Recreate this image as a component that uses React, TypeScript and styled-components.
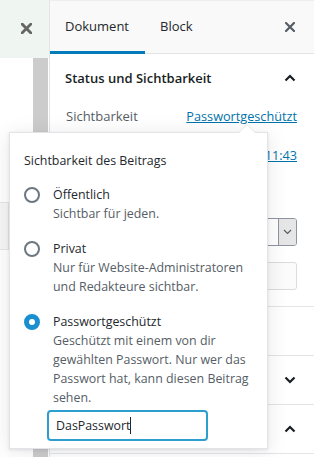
import React from "react";
import styled, { createGlobalStyle } from "styled-components";

const Global = createGlobalStyle`
  html, body { margin: 0; padding: 0; background: #fff; }
  body { font-family: "Open Sans", "Noto Sans", sans-serif; color: #23282d; }
  * { box-sizing: border-box; }
`;

const Page = styled.div`
  position: relative;
  width: 314px;
  height: 457px;
  overflow: hidden;
  display: flex;
  background: #fff;
`;

const LeftCol = styled.div`
  width: 49px;
  display: flex;
  flex-direction: column;
  background: #fff;
`;

const LeftHeader = styled.div`
  height: 58px;
  background: #eff5f1;
  display: flex;
  align-items: center;
  justify-content: flex-end;
  padding-right: 17px;
  padding-bottom: 1px;
`;

const LeftBody = styled.div`
  flex: 1;
  display: flex;
  justify-content: flex-end;
  position: relative;
`;

const ScrollBar = styled.div`
  width: 15px;
  margin-right: 1px;
  background: #cccccc;
`;

const GhostBox = styled.div`
  position: absolute;
  left: -2px;
  top: 144px;
  width: 11px;
  height: 48px;
  background: #f6f6f6;
  border: 1px solid #e6e6e6;
`;

const Sidebar = styled.div`
  flex: 1;
  border-left: 1px solid #e2e4e7;
  display: flex;
  flex-direction: column;
`;

const Tabs = styled.div`
  height: 54px;
  display: flex;
  align-items: stretch;
  background: #f9f9f9;
  border-bottom: 1px solid #e2e4e7;
  border-top: 1px solid #eeeeee;
`;

const Tab = styled.div<{ $active?: boolean }>`
  padding: 0 15px;
  width: ${(p) => (p.$active ? "95px" : "auto")};
  display: flex;
  align-items: center;
  font-size: 13px;
  color: #23282d;
  border-bottom: 3px solid ${(p) => (p.$active ? "#007cba" : "transparent")};
  margin-bottom: -1px;
`;

const TabSpacer = styled.div`
  flex: 1;
`;

const CloseBtn = styled.div`
  width: 48px;
  display: flex;
  align-items: center;
  justify-content: center;
`;

const Panel = styled.div`
  border-bottom: 1px solid #e2e4e7;
`;

const PanelHeader = styled.div`
  height: 48px;
  display: flex;
  align-items: center;
  justify-content: space-between;
  padding: 0 18px 0 15px;
  font-size: 13px;
  font-weight: 600;
  color: #191e23;
`;

const Row = styled.div<{ $h: number }>`
  height: ${(p) => p.$h}px;
  display: flex;
  align-items: center;
  justify-content: space-between;
  padding: 0 17px 0 16px;
  font-size: 13px;
`;

const Divider = styled.div`
  height: 1px;
  background: #e2e4e7;
`;

const RowLabel = styled.span`
  color: #555d66;
`;

const Link = styled.span`
  color: #0073aa;
  text-decoration: underline;
  font-size: 12.7px;
`;

const SelectBox = styled.div`
  height: 28px;
  width: 60px;
  display: flex;
  border: 1px solid #8d96a0;
  border-radius: 3px;
  overflow: hidden;
  margin-left: auto;
`;

const SelectArrow = styled.div`
  margin-left: auto;
  width: 18px;
  background: #e6e6e6;
  border-left: 1px solid #8d96a0;
  display: flex;
  align-items: center;
  justify-content: center;
`;

const GhostButton = styled.div`
  height: 28px;
  width: 60px;
  margin-left: auto;
  border: 1px solid #dcdcdc;
  border-radius: 3px;
  background: #fbfbfb;
`;

const Popover = styled.div`
  position: absolute;
  left: 9px;
  top: 132px;
  width: 259px;
  height: 317px;
  background: #fff;
  border: 1px solid #e2e4e7;
  box-shadow: 0 3px 20px rgba(25, 30, 35, 0.1), 0 1px 3px rgba(25, 30, 35, 0.1);
  padding: 18px 10px 0 14px;
  &::before, &::after {
    content: "";
    position: absolute;
    left: 228px;
    width: 0;
    height: 0;
    border-style: solid;
  }
  &::before {
    top: -9px;
    border-width: 0 9px 9px 9px;
    border-color: transparent transparent #e2e4e7 transparent;
  }
  &::after {
    top: -8px;
    left: 229px;
    border-width: 0 8px 8px 8px;
    border-color: transparent transparent #fff transparent;
  }
`;

const Legend = styled.div`
  font-size: 12.4px;
  color: #23282d;
  line-height: 19px;
  margin-bottom: 15px;
  white-space: nowrap;
`;

const Options = styled.div`
  display: flex;
  flex-direction: column;
  gap: 16px;
`;

const Option = styled.div`
  display: flex;
  gap: 13px;
  align-items: flex-start;
`;

const Radio = styled.span<{ $checked?: boolean }>`
  flex: none;
  width: 16px;
  height: 16px;
  margin-top: 2px;
  border-radius: 50%;
  border: ${(p) => (p.$checked ? "5px solid #1a8fd0" : "2px solid #6c7781")};
  background: #fff;
`;

const OptionText = styled.div`
  font-size: 12.4px;
  line-height: 19px;
  white-space: nowrap;
`;

const OptionLabel = styled.div`
  color: #23282d;
`;

const OptionDesc = styled.div`
  color: #555d66;
`;

const PasswordInput = styled.div`
  margin-top: 3px;
  width: 161px;
  height: 31px;
  border: 2px solid #2d9fcf;
  border-radius: 4px;
  display: flex;
  align-items: center;
  padding-left: 7px;
  font-size: 12.4px;
  color: #23282d;
  margin-left: -6px;
`;

const Caret = styled.span`
  display: inline-block;
  width: 1px;
  height: 17px;
  background: #23282d;
`;

const XIcon = ({ color = "#555d66", size = 10, w = 2.2 }: { color?: string; size?: number; w?: number }) => (
  <svg width={size} height={size} viewBox="0 0 10 10">
    <path d="M1 1 L9 9 M9 1 L1 9" stroke={color} strokeWidth={w} strokeLinecap="square" />
  </svg>
);

const Chevron = ({ up }: { up?: boolean }) => (
  <svg width="12" height="8" viewBox="0 0 12 8">
    <path d={up ? "M1.5 6.5 L6 2 L10.5 6.5" : "M1.5 1.5 L6 6 L10.5 1.5"} stroke="#191e23" strokeWidth="2.2" fill="none" />
  </svg>
);

export default function App() {
  return (
    <Page>
      <Global />
      <LeftCol>
        <LeftHeader>
          <XIcon color="#666" size={11} w={2.6} />
        </LeftHeader>
        <LeftBody>
          <GhostBox />
          <ScrollBar />
        </LeftBody>
      </LeftCol>
      <Sidebar>
        <Tabs>
          <Tab $active>Dokument</Tab>
          <Tab>Block</Tab>
          <TabSpacer />
          <CloseBtn>
            <XIcon color="#555d66" size={10} w={2.2} />
          </CloseBtn>
        </Tabs>
        <Panel>
          <PanelHeader>
            <span>Status und Sichtbarkeit</span>
            <Chevron up />
          </PanelHeader>
          <Row $h={28}>
            <RowLabel>Sichtbarkeit</RowLabel>
            <Link>Passwortgeschützt</Link>
          </Row>
          <Row $h={50}>
            <RowLabel />
            <Link>11:43</Link>
          </Row>
          <Row $h={26} />
          <Row $h={52}>
            <SelectBox>
              <SelectArrow>
                <svg width="9" height="6" viewBox="0 0 9 6">
                  <path d="M1 1 L4.5 4.5 L8 1" stroke="#555d66" strokeWidth="1.2" fill="none" />
                </svg>
              </SelectArrow>
            </SelectBox>
          </Row>
          <Row $h={36}>
            <GhostButton />
          </Row>
          <Row $h={12} />
          <Divider />
          <Row $h={48} />
        </Panel>
        <Panel>
          <PanelHeader>
            <span />
            <Chevron />
          </PanelHeader>
        </Panel>
        <Panel>
          <PanelHeader>
            <span />
            <Chevron up />
          </PanelHeader>
        </Panel>
      </Sidebar>
      <Popover>
        <Legend>Sichtbarkeit des Beitrags</Legend>
        <Options>
          <Option>
            <Radio />
            <OptionText>
              <OptionLabel>Öffentlich</OptionLabel>
              <OptionDesc>Sichtbar für jeden.</OptionDesc>
            </OptionText>
          </Option>
          <Option>
            <Radio />
            <OptionText>
              <OptionLabel>Privat</OptionLabel>
              <OptionDesc>
                Nur für Website-Administratoren
                <br />
                und Redakteure sichtbar.
              </OptionDesc>
            </OptionText>
          </Option>
          <Option>
            <Radio $checked />
            <OptionText>
              <OptionLabel>Passwortgeschützt</OptionLabel>
              <OptionDesc>
                Geschützt mit einem von dir
                <br />
                gewählten Passwort. Nur wer das
                <br />
                Passwort hat, kann diesen Beitrag
                <br />
                sehen.
              </OptionDesc>
              <PasswordInput>
                DasPasswort
                <Caret />
              </PasswordInput>
            </OptionText>
          </Option>
        </Options>
      </Popover>
    </Page>
  );
}
